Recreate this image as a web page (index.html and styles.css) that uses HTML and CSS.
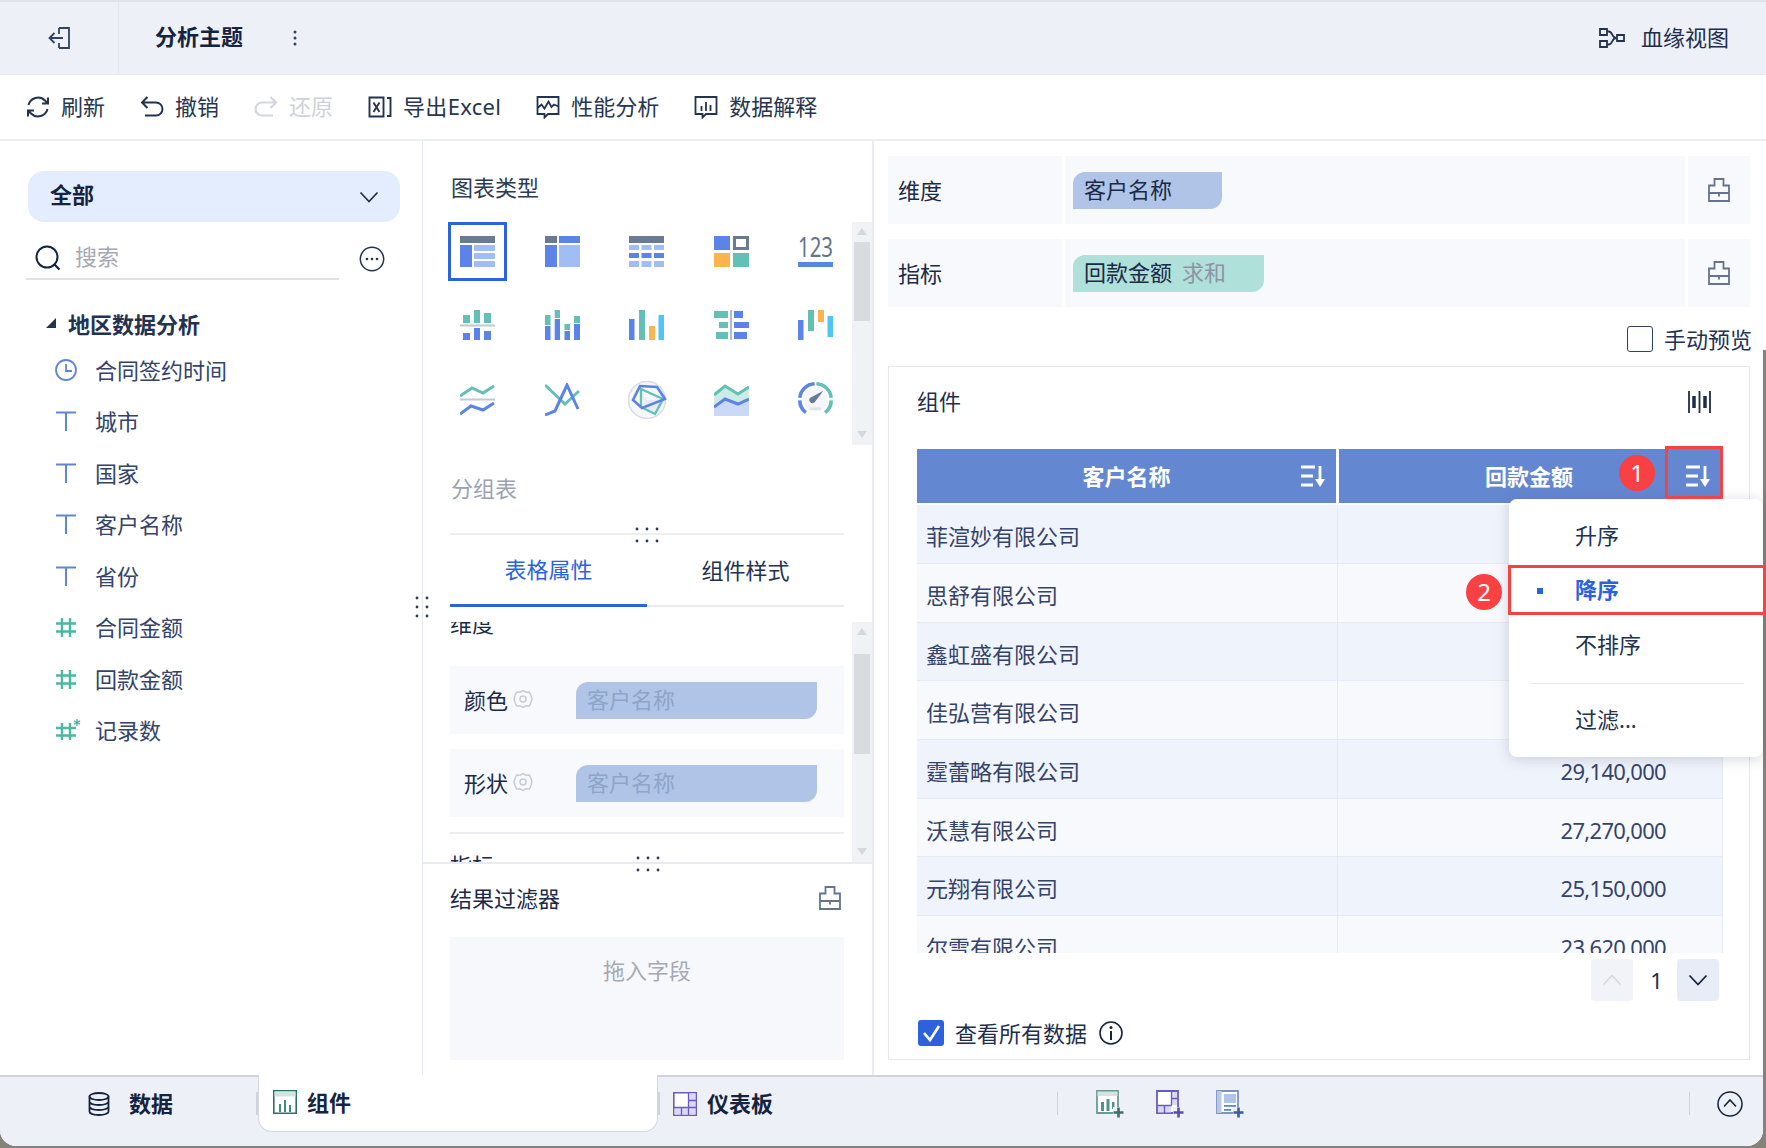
FILE: index.html
```html
<!DOCTYPE html>
<html lang="zh-CN">
<head>
<meta charset="utf-8">
<title>分析主题</title>
<link rel="stylesheet" href="styles.css">
</head>
<body>
<svg class="sprite" aria-hidden="true">
  <symbol id="i-t" viewBox="0 0 22 22"><path d="M1 2.500h20M11 2.500V21" fill="none" stroke="#5f86d6" stroke-width="2"/></symbol>
  <symbol id="i-hash" viewBox="0 0 22 22"><path d="M7 2v19M15 2v19M1 7.500h20M1 15.500h20" fill="none" stroke="#4ab8a4" stroke-width="2.400"/></symbol>
  <symbol id="i-drop" viewBox="0 0 22 24"><path d="M6.500 7.500V1h9v6.500H21v15.500H1V7.500zM1 15h20M11 15v3.500" fill="none" stroke="#65738d" stroke-width="1.800"/></symbol>
  <symbol id="i-sort" viewBox="0 0 26 24"><path d="M1 3h14M1 12h12M1 21h12M20 2v16" fill="none" stroke="#fff" stroke-width="2.800"/><path d="M15 15h10l-5 8z" fill="#fff"/></symbol>
  <symbol id="i-gear" viewBox="0 0 20 20"><path d="M10 1.500l3 1.700 3.400-.2 1.500 3.300L19 10l-1.100 3.700-1.500 3.300-3.400-.2-3 1.700-3-1.700-3.400.2-1.500-3.300L1 10l1.100-3.700L3.600 3l3.400.2z" fill="none" stroke="#c6ccd7" stroke-width="1.500"/><circle cx="10" cy="10" r="3" fill="none" stroke="#c6ccd7" stroke-width="1.500"/></symbol>
  <symbol id="i-dots-h" viewBox="0 0 24 16"><g fill="#2a3a58"><circle cx="2" cy="2" r="1.400"/><circle cx="12" cy="2" r="1.400"/><circle cx="22" cy="2" r="1.400"/><circle cx="2" cy="14" r="1.400"/><circle cx="12" cy="14" r="1.400"/><circle cx="22" cy="14" r="1.400"/></g></symbol>
</svg>

<div class="app">
  <header class="topbar">
    <div class="back-cell">
      <svg class="ic-22" viewBox="0 0 22 22"><path d="M11 1h10v20H11M11 1v6M11 21v-5M1.500 11H15M6.500 6l-5 5 5 5" fill="none" stroke="#33435f" stroke-width="1.800"/></svg>
    </div>
    <div class="app-title">分析主题</div>
    <svg class="title-more" viewBox="0 0 4 16"><g fill="#33425f"><circle cx="2" cy="2" r="1.500"/><circle cx="2" cy="8" r="1.500"/><circle cx="2" cy="14" r="1.500"/></g></svg>
    <div class="lineage">
      <svg class="ic-lineage" viewBox="0 0 26 20"><path d="M8 3.500h2c3.500 0 3 6.500 7 6.500M8 16.500h2c3.500 0 3-6.500 7-6.500" fill="none" stroke="#23324f" stroke-width="1.800"/><path d="M1 1h7v6H1zM1 13h7v6H1zM18 7h7v6h-7z" fill="none" stroke="#23324f" stroke-width="1.800"/></svg>
      <span>血缘视图</span>
    </div>
  </header>

  <nav class="toolbar">
    <div class="tool">
      <svg class="ic-24" viewBox="0 0 24 24"><path d="M2.500 10A9.800 9.800 0 0 1 19 5.500L22 8.500M22 2.500v6h-6M21.500 14A9.800 9.800 0 0 1 5 18.500L2 15.500M2 21.500v-6h6" fill="none" stroke="#23324f" stroke-width="2"/></svg>
      <span>刷新</span>
    </div>
    <div class="tool">
      <svg class="ic-24" viewBox="0 0 24 24"><path d="M7.500 2L2 7.500 7.500 13M2 7.500h14a6.500 6.500 0 0 1 0 13H5" fill="none" stroke="#23324f" stroke-width="2"/></svg>
      <span>撤销</span>
    </div>
    <div class="tool is-disabled">
      <svg class="ic-24" viewBox="0 0 24 24"><path d="M16.500 2L22 7.500 16.500 13M22 7.500H8a6.500 6.500 0 0 0 0 13h11" fill="none" stroke="#d3d8e0" stroke-width="2.200"/></svg>
      <span>还原</span>
    </div>
    <div class="tool tool-excel">
      <svg class="ic-24" viewBox="0 0 24 24"><path d="M1.500 2.500h14v19h-14zM5.500 7.500l6 9.500M11.500 7.500l-6 9.500M19 3h3.500v18H19" fill="none" stroke="#23324f" stroke-width="1.900"/></svg>
      <span>导出Excel</span>
    </div>
    <div class="tool">
      <svg class="ic-24" viewBox="0 0 24 24"><path d="M1.500 2h21v17H12l-3.500 3.500V19h-7zM1.500 13l4-3.500 3 4 4-7 3 5.500 2.500-2.500 4.500 2" fill="none" stroke="#23324f" stroke-width="1.800"/></svg>
      <span>性能分析</span>
    </div>
    <div class="tool">
      <svg class="ic-24" viewBox="0 0 24 24"><path d="M1.500 2h21v17H12l-3.500 3.500V19h-7zM7.500 11v5M12 7v9M16.500 10v6" fill="none" stroke="#23324f" stroke-width="1.800"/></svg>
      <span>数据解释</span>
    </div>
  </nav>

  <main class="main">
    <aside class="left">
      <div class="select">
        <span>全部</span>
        <svg class="ic-chev" viewBox="0 0 20 12"><path d="M1.500 1.500L10 10.500l8.500-9" fill="none" stroke="#23324f" stroke-width="1.800"/></svg>
      </div>
      <div class="search-row">
        <div class="search">
          <svg class="ic-26" viewBox="0 0 26 26"><circle cx="12" cy="12" r="10.500" fill="none" stroke="#14233f" stroke-width="2"/><path d="M19.500 19.500l5 5" stroke="#14233f" stroke-width="2.200"/></svg>
          <span>搜索</span>
        </div>
        <svg class="ic-more" viewBox="0 0 26 26"><circle cx="13" cy="13" r="11.700" fill="none" stroke="#23324f" stroke-width="1.500"/><g fill="#23324f"><circle cx="8" cy="13" r="1.300"/><circle cx="13" cy="13" r="1.300"/><circle cx="18" cy="13" r="1.300"/></g></svg>
      </div>
      <div class="tree-title"><i class="tri"></i>地区数据分析</div>
      <ul class="fields">
        <li><svg class="ic-field" viewBox="0 0 22 22"><circle cx="11" cy="11" r="10" fill="none" stroke="#5f86d6" stroke-width="1.800"/><path d="M11 5v7h6" fill="none" stroke="#5f86d6" stroke-width="1.800"/></svg>合同签约时间</li>
        <li><svg class="ic-field"><use href="#i-t"/></svg>城市</li>
        <li><svg class="ic-field"><use href="#i-t"/></svg>国家</li>
        <li><svg class="ic-field"><use href="#i-t"/></svg>客户名称</li>
        <li><svg class="ic-field"><use href="#i-t"/></svg>省份</li>
        <li><svg class="ic-field"><use href="#i-hash"/></svg>合同金额</li>
        <li><svg class="ic-field"><use href="#i-hash"/></svg>回款金额</li>
        <li><svg class="ic-field ic-star" viewBox="0 0 26 22"><path d="M7 4v17M15 4v17M1 9h20M1 16.500h20" fill="none" stroke="#4ab8a4" stroke-width="2.400"/><path d="M22 0v7M19 2l6 3M25 2l-6 3" stroke="#4ab8a4" stroke-width="1.400"/></svg>记录数</li>
      </ul>
    </aside>

    <section class="mid">
      <div class="mid-top">
        <h2 class="mid-title">图表类型</h2>
        <div class="chart-wrap">
          <div class="chart-grid">
            <div class="chart is-selected"><svg class="ic-chart" viewBox="0 0 35 31"><path d="M0 0h35v7H0z" fill="#6b7a93"/><path d="M0 9h12v22H0z" fill="#5b83e8"/><path d="M14 9h21v6H14zM14 17h21v6H14zM14 25h21v6H14z" fill="#a1bdf5"/></svg></div>
            <div class="chart"><svg class="ic-chart" viewBox="0 0 35 31"><path d="M0 0h12v7H0z" fill="#6b7a93"/><path d="M14 0h21v7H14zM0 9h12v22H0z" fill="#5b83e8"/><path d="M14 9h21v22H14z" fill="#a1bdf5"/></svg></div>
            <div class="chart"><svg class="ic-chart" viewBox="0 0 35 31"><path d="M0 0h35v7H0z" fill="#6b7a93"/><path d="M0 9h10v5H0zM12.500 9h10v5h-10zM25 9h10v5H25zM0 25h10v6H0zM12.500 25h10v6h-10zM25 25h10v6H25z" fill="#a1bdf5"/><path d="M0 17h10v5H0zM12.500 17h10v5h-10zM25 17h10v5H25z" fill="#5b83e8"/></svg></div>
            <div class="chart"><svg class="ic-chart" viewBox="0 0 35 31"><path d="M0 0h16v14H0z" fill="#5b83e8"/><path d="M20.500 1.500h13v11h-13z" fill="none" stroke="#6b7a93" stroke-width="3"/><path d="M0 17h16v14H0z" fill="#fdb44e"/><path d="M19 17h16v14H19z" fill="#62c0b4"/></svg></div>
            <div class="chart"><svg class="ic-chart" viewBox="0 0 35 31"><text class="num-text" x="0" y="21" textLength="35" lengthAdjust="spacingAndGlyphs">123</text><path d="M0 26h35v5H0z" fill="#5b83e8"/></svg></div>

            <div class="chart"><svg class="ic-chart" viewBox="0 0 35 31"><path d="M0 14.500h35v2H0z" fill="#c0c7d5"/><path d="M3 5h7v8H3zM14 0h6v13h-6zM24 3h7v10h-7z" fill="#62c0b4"/><path d="M3 23h7v7H3zM14 18h6v12h-6zM24 21h7v9h-7z" fill="#5b83e8"/></svg></div>
            <div class="chart"><svg class="ic-chart" viewBox="0 0 35 31"><path d="M0 5h5.500v10H0zM9.700 0H15v8H9.700zM19.500 14H25v6h-5.500zM29 6h6v7h-6z" fill="#62c0b4"/><path d="M0 16h5.500v14H0zM9.700 9H15v21H9.700zM19.500 21H25v9h-5.500zM29 14h6v16h-6z" fill="#5b83e8"/></svg></div>
            <div class="chart"><svg class="ic-chart" viewBox="0 0 35 31"><path d="M0 9h5.500v21H0z" fill="#5b83e8"/><path d="M10 0h6v30h-6z" fill="#62c0b4"/><path d="M20 16h6v14h-6z" fill="#fdb44e"/><path d="M29.500 5H35v25h-5.500z" fill="#4ec5f5"/></svg></div>
            <div class="chart"><svg class="ic-chart" viewBox="0 0 35 31"><path d="M16 0h2v30h-2z" fill="#b3bbcb"/><path d="M0 1h14v7H0zM5 12h9v6H5zM2 22h12v7H2z" fill="#62c0b4"/><path d="M20 1h9v7h-9zM20 12h15v6H20zM20 22h13v7H20z" fill="#5b83e8"/></svg></div>
            <div class="chart"><svg class="ic-chart" viewBox="0 0 35 31"><path d="M0 10h5.500v20H0z" fill="#5b83e8"/><path d="M10 0h6v21h-6z" fill="#62c0b4"/><path d="M20 0h6v12h-6z" fill="#fdb44e"/><path d="M29.500 6H35v21h-5.500z" fill="#4ec5f5"/></svg></div>

            <div class="chart"><svg class="ic-chart-t" viewBox="0 0 35 33"><path d="M0 13l12-8 11 5 11-7" fill="none" stroke="#62c0b4" stroke-width="3"/><path d="M0 15.500h35v2H0z" fill="#c0c7d5"/><path d="M0 31l11-8 12 4 11-7" fill="none" stroke="#5b83e8" stroke-width="3"/></svg></div>
            <div class="chart"><svg class="ic-chart-t" viewBox="0 0 35 33"><path d="M0 2l20 19 14-13" fill="none" stroke="#62c0b4" stroke-width="3"/><path d="M0 32l10-4 12-26 11 24" fill="none" stroke="#5b83e8" stroke-width="3"/></svg></div>
            <div class="chart"><svg class="ic-radar" viewBox="0 0 40 40"><circle cx="20" cy="20" r="18.500" fill="#f6f7fa" stroke="#d8dce6" stroke-width="1.500"/><path d="M20 20l18-1-7 15-13-6-3-16z" fill="#e8ecf2"/><path d="M14 9l22 10-8 15-14-7z" fill="none" stroke="#62c0b4" stroke-width="2.300"/><path d="M13 6l17 1 8 12-23 9-9-8z" fill="none" stroke="#5b83e8" stroke-width="2.600"/></svg></div>
            <div class="chart"><svg class="ic-chart-t" viewBox="0 0 35 33"><path d="M0 12l11-9 13 8 11-7v12l-11 5-13-5-11 8z" fill="#cdeae5"/><path d="M0 24l11-8 13 5 11-5v17H0z" fill="#cbd9f8"/><path d="M0 12l11-9 13 8 11-7" fill="none" stroke="#62c0b4" stroke-width="3"/><path d="M0 24l11-8 13 5 11-5" fill="none" stroke="#5b83e8" stroke-width="3"/></svg></div>
            <div class="chart"><svg class="ic-gauge" viewBox="0 0 40 40"><circle cx="20" cy="20" r="14" fill="#f4f6fb"/><path d="M9 35A18 18 0 0 1 2 21M2 18A18 18 0 0 1 19 2" fill="none" stroke="#5b83e8" stroke-width="4"/><path d="M21 2A18 18 0 0 1 38 18M38 21A18 18 0 0 1 31 35" fill="none" stroke="#62c0b4" stroke-width="4"/><path d="M14 18l15-8-10 13a3.500 3.500 0 1 1-5-5z" fill="#6b7a93"/><path d="M14 29h12v3H14z" fill="#dfe3ea"/></svg></div>
          </div>
          <div class="scrollbar bar-chart">
            <i class="arrow-up"></i>
            <i class="thumb thumb-chart"></i>
            <i class="bar-space"></i>
            <i class="arrow-down"></i>
          </div>
        </div>
        <div class="chart-name">分组表</div>
      </div>

      <div class="tabs-block">
        <svg class="grip grip-a"><use href="#i-dots-h"/></svg>
        <div class="tabs">
          <div class="tab is-active"><span>表格属性</span></div>
          <div class="tab"><span>组件样式</span></div>
        </div>
      </div>

      <div class="prop-wrap">
        <div class="prop-scroll">
          <div class="prop-cut-top">维度</div>
          <div class="prop-row">
            <span class="prop-label">颜色</span>
            <svg class="ic-gear"><use href="#i-gear"/></svg>
            <span class="pill pill-ghost"><span>客户名称</span></span>
          </div>
          <div class="prop-row prop-row-2">
            <span class="prop-label">形状</span>
            <svg class="ic-gear"><use href="#i-gear"/></svg>
            <span class="pill pill-ghost"><span>客户名称</span></span>
          </div>
          <div class="prop-sep"></div>
          <div class="prop-cut-bottom">指标</div>
        </div>
        <div class="scrollbar bar-prop">
          <i class="arrow-up"></i>
          <i class="thumb-gap"></i>
          <i class="thumb thumb-prop"></i>
          <i class="bar-space"></i>
          <i class="arrow-down"></i>
        </div>
      </div>

      <div class="filter">
        <svg class="grip grip-b"><use href="#i-dots-h"/></svg>
        <div class="filter-head">
          <span>结果过滤器</span>
          <svg class="ic-drop"><use href="#i-drop"/></svg>
        </div>
        <div class="filter-box">拖入字段</div>
      </div>
    </section>

    <section class="right">
      <div class="shelf">
        <div class="shelf-cell shelf-label">维度</div>
        <div class="shelf-cell shelf-body"><span class="pill pill-blue"><span>客户名称</span></span></div>
        <div class="shelf-cell shelf-end"><svg class="ic-drop"><use href="#i-drop"/></svg></div>
      </div>
      <div class="shelf shelf-2">
        <div class="shelf-cell shelf-label">指标</div>
        <div class="shelf-cell shelf-body"><span class="pill pill-green"><span>回款金额</span><em>求和</em></span></div>
        <div class="shelf-cell shelf-end"><svg class="ic-drop"><use href="#i-drop"/></svg></div>
      </div>
      <div class="preview"><i class="check-empty"></i><span>手动预览</span></div>

      <div class="widget">
        <div class="widget-head">
          <span>组件</span>
          <svg class="ic-cols" viewBox="0 0 23 22"><path d="M1 0v22M11.500 0v22M22 0v22" stroke="#1f2d4a" stroke-width="1.800"/><path d="M6 5v12M17 5v12" stroke="#1f2d4a" stroke-width="3.500"/></svg>
        </div>
        <div class="table">
          <div class="thead">
            <div class="th"><span>客户名称</span><svg class="ic-sort"><use href="#i-sort"/></svg></div>
            <div class="th th-2"><span>回款金额</span><svg class="ic-sort"><use href="#i-sort"/></svg></div>
          </div>
          <div class="tr odd"><div class="td">菲渲妙有限公司</div><div class="td num"></div></div>
          <div class="tr"><div class="td">思舒有限公司</div><div class="td num"></div></div>
          <div class="tr odd"><div class="td">鑫虹盛有限公司</div><div class="td num"></div></div>
          <div class="tr"><div class="td">佳弘营有限公司</div><div class="td num"></div></div>
          <div class="tr odd"><div class="td">霆蕾略有限公司</div><div class="td num">29,140,000</div></div>
          <div class="tr"><div class="td">沃慧有限公司</div><div class="td num">27,270,000</div></div>
          <div class="tr odd"><div class="td">元翔有限公司</div><div class="td num">25,150,000</div></div>
          <div class="tr"><div class="td">尔雪有限公司</div><div class="td num">23,620,000</div></div>
        </div>
        <div class="pager">
          <div class="page-btn is-off"><svg class="ic-pg" viewBox="0 0 20 12"><path d="M1.500 10.500L10 1.500l8.500 9" fill="none" stroke="#d5d9e0" stroke-width="1.800"/></svg></div>
          <div class="page-no">1</div>
          <div class="page-btn is-on"><svg class="ic-pg" viewBox="0 0 20 12"><path d="M1.500 1.500L10 10.500l8.500-9" fill="none" stroke="#14233f" stroke-width="1.800"/></svg></div>
        </div>
        <div class="all-data">
          <i class="check-on"><svg viewBox="0 0 26 26"><path d="M6 13l6 7 9-14" fill="none" stroke="#fff" stroke-width="2.600"/></svg></i>
          <span>查看所有数据</span>
          <svg class="ic-info" viewBox="0 0 24 24"><circle cx="12" cy="12" r="11" fill="none" stroke="#14233f" stroke-width="1.600"/><path d="M12 10v9" stroke="#14233f" stroke-width="2"/><circle cx="12" cy="6.500" r="1.500" fill="#14233f"/></svg>
        </div>
      </div>
    </section>
  </main>

  <footer class="bottombar">
    <div class="btab btab-data">
      <svg class="ic-btab" viewBox="0 0 22 24"><g fill="none" stroke="#14233f" stroke-width="1.800"><ellipse cx="11" cy="4.500" rx="9.500" ry="3.500"/><path d="M1.500 4.500v15c0 2 4 3.500 9.500 3.500s9.500-1.500 9.500-3.500v-15M1.500 9.500c0 2 4 3.500 9.500 3.500s9.500-1.500 9.500-3.500M1.500 14.500c0 2 4 3.500 9.500 3.500s9.500-1.500 9.500-3.500"/></g></svg>
      <span>数据</span>
    </div>
    <i class="btab-sep"></i>
    <div class="btab btab-active">
      <svg class="ic-btab" viewBox="0 0 24 24"><path d="M.8.800h22.400v22.400H.8z" fill="#fff" stroke="#2f6f6a" stroke-width="1.600"/><path d="M1.500 1.500h21v5h-21z" fill="#cfe6e0"/><path d="M6 14h2v8H6zM11 10h2v12h-2zM16 15h2v7h-2z" fill="#3f8b84"/></svg>
      <span>组件</span>
    </div>
    <i class="btab-sep"></i>
    <div class="btab btab-dash">
      <svg class="ic-btab" viewBox="0 0 24 24"><path d="M.8.800h22.400v22.400H.8z" fill="#fff" stroke="#6a5bc0" stroke-width="1.600"/><path d="M16 1.500h6.500V8H16zM16 9h6.500v6H16zM1.500 16H8v6.500H1.500zM9 16h6v6.500H9zM16 16h6.500v6.500H16z" fill="#dcd8f5"/><path d="M.8 15.500h22.400M15.500.8v22.400M15.500 8.500h8M8.500 15.500v8" fill="none" stroke="#6a5bc0" stroke-width="1.300"/></svg>
      <span>仪表板</span>
    </div>
    <div class="bar-tools">
      <i class="bar-sep"></i>
      <svg class="ic-add ic-add-1" viewBox="0 0 28 28"><path d="M1 1h21v22H1z" fill="#fff" stroke="#6c9a93" stroke-width="1.800"/><path d="M1.500 1.500h20V6h-20z" fill="#cfe6e0"/><path d="M5 12h3v9H5zM10.500 9h3v12h-3zM16 12h2.500v7H16z" fill="#4f938b"/><path d="M17 17h11v11H17z" fill="#edf0f6"/><path d="M22.500 17.500v10M17.500 22.500h10" stroke="#3f6f6a" stroke-width="2.600"/></svg>
      <svg class="ic-add" viewBox="0 0 28 28"><path d="M1 1h21v22H1z" fill="#fff" stroke="#6a5bc0" stroke-width="1.800"/><path d="M15.500 2H21v6h-5.500zM15.500 9H21v6h-5.500zM2 16h6v6.500H2zM9 16h6v6.500H9z" fill="#dcd8f5"/><path d="M1 15.500h14.500M15.500 1v14.500M15.500 8.500H22M8.500 15.500V23" fill="none" stroke="#6a5bc0" stroke-width="1.300"/><path d="M17 17h11v11H17z" fill="#edf0f6"/><path d="M22.500 17.500v10M17.500 22.500h10" stroke="#5a4bb0" stroke-width="2.600"/></svg>
      <svg class="ic-add" viewBox="0 0 28 28"><path d="M1 1h21v22H1z" fill="#fff" stroke="#7c93c4" stroke-width="1.800"/><path d="M1 1h4.500v22H1z" fill="#b9c8e8"/><path d="M8 4h12v9H8z" fill="#afc4e9"/><path d="M8 15h12v1.800H8z" fill="#5f86d6"/><path d="M8 19h7v1.800H8z" fill="#5f86d6"/><path d="M17 17h11v11H17z" fill="#edf0f6"/><path d="M22.500 17.500v10M17.500 22.500h10" stroke="#3e5a97" stroke-width="2.600"/></svg>
      <i class="bar-sep bar-sep-2"></i>
      <svg class="ic-up" viewBox="0 0 26 26"><circle cx="13" cy="13" r="12" fill="none" stroke="#14233f" stroke-width="1.500"/><path d="M7 15.500l6-6.500 6 6.500" fill="none" stroke="#14233f" stroke-width="1.600"/></svg>
    </div>
  </footer>

  <svg class="grip-v" viewBox="0 0 14 22"><g fill="#2a3a58"><circle cx="2" cy="2" r="1.400"/><circle cx="12" cy="2" r="1.400"/><circle cx="2" cy="11" r="1.400"/><circle cx="12" cy="11" r="1.400"/><circle cx="2" cy="20" r="1.400"/><circle cx="12" cy="20" r="1.400"/></g></svg>

  <div class="menu">
    <div class="menu-item"><span>升序</span></div>
    <div class="menu-item is-current"><i class="menu-dot"></i><span>降序</span></div>
    <div class="menu-item"><span>不排序</span></div>
    <div class="menu-sep"></div>
    <div class="menu-item"><span>过滤...</span></div>
  </div>
  <div class="mark-box mark-box-sort"></div>
  <div class="mark-box mark-box-menu"></div>
  <div class="mark-no mark-no-1">1</div>
  <div class="mark-no mark-no-2">2</div>
</div>
</body>
</html>
```

FILE: styles.css
```css
* { box-sizing: border-box; }
html, body { margin: 0; padding: 0; height: 1148px; }
body {
  overflow: hidden;
  background: linear-gradient(#fff 350px, #85827a 350px);
  font-family: "Noto Sans", "Noto Sans CJK SC", sans-serif;
  font-size: 22px;
  line-height: 30px;
  color: #1b2a47;
}
h2, ul { margin: 0; padding: 0; font: inherit; }
li { list-style: none; }
i, em { font-style: normal; display: block; }
svg { display: block; flex: none; }
.sprite { position: absolute; width: 0; height: 0; }

.app { position: relative; width: 1763px; height: 1146px; display: flex; flex-direction: column; background: #fff; border-radius: 0 0 16px 16px; }

/* top bar */
.topbar { width: 1766px; height: 75px; flex: none; display: flex; align-items: center; background: #edf0f6; border-top: 2px solid #dfe2e7; border-bottom: 1px solid #e2e5ec; }
.back-cell { width: 119px; height: 100%; display: flex; align-items: center; padding-left: 48px; border-right: 1px solid #e4e7ee; }
.ic-22 { width: 22px; height: 22px; }
.app-title { margin-left: 36px; padding-bottom: 4px; font-weight: 700; color: #14233f; }
.title-more { width: 4px; height: 16px; margin-left: 50px; }
.lineage { margin-left: auto; margin-right: 37px; display: flex; align-items: center; gap: 16px; color: #1f2e4b; }
.lineage span { padding-bottom: 2px; }
.ic-lineage { width: 26px; height: 20px; }

/* toolbar */
.toolbar { width: 1766px; height: 66px; flex: none; display: flex; align-items: center; gap: 35px; padding-left: 26px; border-bottom: 2px solid #eceef2; }
.tool { display: flex; align-items: center; gap: 11px; color: #27364f; }
.tool span { padding-bottom: 2px; }
.tool-excel span { letter-spacing: .3px; }
.tool.is-disabled { color: #cdd2da; }
.ic-24 { width: 24px; height: 24px; }

/* main */
.main { height: 934px; flex: none; display: flex; }

/* left */
.left { width: 423px; flex: none; padding: 30px 0 0 28px; border-right: 1px solid #e6e8ef; }
.select { width: 372px; height: 51px; display: flex; align-items: center; justify-content: space-between; padding: 0 21px 0 22px; background: #e4edfd; border-radius: 16px; font-weight: 700; color: #14233f; }
.select span { padding-bottom: 6px; }
.ic-chev { width: 20px; height: 12px; }
.search-row { display: flex; align-items: center; margin: 15px 0 0 -2px; }
.search { width: 313px; height: 43px; display: flex; align-items: center; gap: 14px; padding-left: 9px; border-bottom: 2px solid #e0e2e6; color: #a4a9b4; }
.search span { padding-bottom: 4px; }
.ic-26 { width: 26px; height: 26px; }
.ic-more { width: 26px; height: 26px; margin-left: 20px; }
.tree-title { position: relative; display: flex; align-items: center; margin: 29px 0 0 18px; padding-left: 22px; height: 30px; font-weight: 700; color: #22324f; line-height: 30px; }
.tri { width: 0; height: 0; position: absolute; left: 0; top: 9px; border-style: solid; border-width: 0 0 10px 10px; border-color: transparent transparent #22324f transparent; }
.fields { margin-top: 5px; }
.fields li { height: 51.500px; display: flex; align-items: center; gap: 18px; padding-left: 26px; color: #33436a; }
.ic-field { width: 22px; height: 22px; margin-left: 1px; }
.ic-star { width: 26px; margin-right: -4px; }

/* middle */
.mid { width: 451px; flex: none; display: flex; flex-direction: column; border-right: 2px solid #e9ebf1; }
.mid-top { padding: 31px 0 0 28px; }
.mid-title { color: #2b3a55; }
.chart-wrap { display: flex; margin: 20px 0 0 -3px; }
.chart-grid { width: 405px; height: 223px; display: grid; grid-template-columns: repeat(5, 59px); grid-template-rows: repeat(3, 59px); column-gap: 25.500px; row-gap: 15px; align-content: start; }
.chart { display: flex; align-items: center; justify-content: center; }
.chart.is-selected { border: 3px solid #2a63dd; }
.ic-chart { width: 35px; height: 31px; }
.ic-chart-t { width: 35px; height: 33px; }
.ic-radar { width: 40px; height: 40px; }
.ic-gauge { width: 35px; height: 35px; }
.num-text { font-size: 28px; font-family: "Noto Sans", sans-serif; font-weight: 400; fill: #65738d; }
.scrollbar { width: 20px; flex: none; display: flex; flex-direction: column; align-items: center; background: #f1f2f5; }
.bar-chart { height: 223px; }
.bar-prop { height: 240px; }
.arrow-up, .arrow-down { width: 0; height: 0; margin: 6px 0 7px; border-style: solid; border-color: transparent; border-width: 0 5px 7px; }
.arrow-up { border-bottom-color: #d4d8df; }
.arrow-down { border-width: 7px 5px 0; border-top-color: #d4d8df; }
.thumb { width: 16px; background: #d8dbe0; }
.thumb-chart { height: 79px; }
.thumb-prop { height: 100px; }
.thumb-gap { height: 12px; }
.bar-space { flex: 1; }
.chart-name { margin-top: 28px; color: #9aa3b2; }

.tabs-block { position: relative; margin: 30px 28px 0 27px; border-top: 2px solid #eceef2; }
.grip { position: absolute; width: 24px; height: 16px; left: 50%; margin-left: -12px; }
.grip-a { top: -8px; }
.tabs { height: 72px; display: flex; border-bottom: 2px solid #e9ebf1; }
.tab { flex: 1; display: flex; align-items: center; justify-content: center; margin-bottom: -2px; color: #22324f; }
.tab span { padding-bottom: 2px; }
.tab.is-active { color: #2a63dd; border-bottom: 3px solid #2a63dd; }

.prop-wrap { height: 240px; flex: none; display: flex; margin: 15px 0 0 27px; }
.prop-scroll { width: 395px; margin-right: 8px; overflow: hidden; }
.prop-cut-top { margin-top: -14px; }
.prop-row { height: 68px; display: flex; align-items: center; margin-top: 28px; padding-left: 14px; background: #f8f9fd; }
.prop-row-2 { margin-top: 15px; }
.ic-gear { width: 20px; height: 20px; margin: -2px 43px 0 4px; }
.prop-label { width: 45px; }
.pill { display: inline-flex; align-items: center; height: 37px; border-radius: 12px 0 12px 0; padding: 0 11px; line-height: 30px; }
.pill span, .pill em { padding-bottom: 3px; }
.pill-ghost { width: 241px; background: #afc4e7; color: #8ea4c8; }
.prop-sep { height: 2px; margin-top: 15px; background: #eceef2; }
.prop-cut-bottom { margin-top: 16px; }

.filter { position: relative; flex: 1; padding: 19px 28px 0 27px; border-top: 2px solid #e9ebf1; }
.grip-b { top: -8px; }
.filter-head { display: flex; align-items: center; justify-content: space-between; padding-right: 3px; }
.ic-drop { width: 22px; height: 24px; }
.filter-box { height: 123px; margin-top: 24px; padding-top: 18px; text-align: center; background: #f7f8fc; color: #a4a9b4; }

/* right */
.right { flex: 1; padding: 15px 13px 0 14px; }
.shelf { display: grid; grid-template-columns: 174px 1fr 62px; column-gap: 3px; height: 68px; }
.shelf-2 { margin-top: 15px; }
.shelf-cell { display: flex; align-items: center; background: #f8f9fd; }
.shelf-label { padding-left: 10px; }
.shelf-body { padding-left: 8px; }
.shelf-end { justify-content: center; }
.pill-blue { width: 149px; background: #afc4e7; }
.pill-green { width: 191px; background: #afe0d9; }
.pill-green em { margin-left: 10px; color: #8d94a4; }

.preview { height: 26px; margin: 19px -2px 0 0; display: flex; align-items: center; justify-content: flex-end; gap: 11px; color: #22324f; }
.check-empty { width: 26px; height: 26px; background: #fff; border: 1.500px solid #33425f; border-radius: 3px; }

.widget { height: 694px; margin-top: 14px; padding: 0 26px 0 28px; border: 1px solid #e6e8f0; }
.widget-head { height: 82px; padding: 0 12px 14px 0; display: flex; align-items: center; justify-content: space-between; color: #1f2e4b; }
.ic-cols { width: 23px; height: 22px; margin-top: 2px; }

.table { height: 504px; overflow: hidden; }
.thead { display: grid; grid-template-columns: 419px 1fr; column-gap: 3px; height: 54px; margin-bottom: 2.300px; }
.th { position: relative; display: flex; align-items: center; justify-content: center; background: #6487d1; color: #fff; font-weight: 700; }
.th-2 span { margin-right: 4px; }
.ic-sort { position: absolute; right: 10px; top: 15px; width: 26px; height: 24px; }
.th-2 .ic-sort { right: 12px; }
.tr { display: grid; grid-template-columns: 421px 1fr; height: 58.700px; border-bottom: 1px solid #e6eaf3; background: #f7f9fd; }
.tr.odd { background: #eff3fb; }
.td { display: flex; align-items: center; padding: 4px 0 0 9px; border-right: 1px solid #e6eaf3; color: #33436a; }
.td.num { justify-content: flex-end; padding-right: 56px; letter-spacing: -.7px; }

.pager { display: flex; align-items: center; justify-content: flex-end; margin-top: 6px; padding-right: 4px; }
.page-btn { width: 42px; height: 42px; display: flex; align-items: center; justify-content: center; border-radius: 4px; }
.page-btn.is-off { background: #f1f3f9; }
.page-btn.is-on { background: #e8ecf6; }
.ic-pg { width: 20px; height: 12px; }
.page-no { width: 44px; padding-left: 3px; text-align: center; color: #1f2e4b; }

.all-data { display: flex; align-items: center; margin: 19px 0 0 1px; height: 26px; }
.check-on { width: 26px; height: 26px; background: #2e62dd; border-radius: 3px; }
.all-data span { margin-left: 11px; color: #1f2e4b; }
.ic-info { width: 24px; height: 24px; margin-left: 12px; }

/* bottom */
.bottombar { flex: 1; display: flex; align-items: flex-start; width: 1763px; background: #edf0f6; border-top: 2px solid #cfd3df; border-radius: 0 0 16px 16px; }
.btab { height: 53px; display: flex; align-items: center; font-weight: 700; color: #14233f; }
.btab-data span, .btab-dash span { padding-bottom: 2px; }
.btab-data { width: 256px; padding-left: 88px; gap: 19px; }
.btab-sep { width: 2px; height: 23px; margin-top: 15px; background: #cfd3df; }
.btab-active { position: relative; width: 400px; height: 57px; margin-top: -2px; padding: 0 0 2px 14px; gap: 10px; background: #fff; border: 1px solid #d4d8e3; border-top: 0; border-radius: 0 0 14px 14px; }
.btab-dash { padding-left: 13px; gap: 10px; }
.ic-btab { width: 24px; height: 24px; }
.btab-data .ic-btab { width: 22px; }
.bar-tools { display: flex; align-items: center; height: 53px; margin-left: auto; }
.bar-sep { width: 1px; height: 23px; background: #cfd3df; margin-right: 38px; }
.bar-sep-2 { margin: 0 27px 0 445px; }
.ic-add { width: 28px; height: 28px; margin-right: 32px; }
.ic-add:nth-of-type(3) { margin-right: 0; }
.ic-up { width: 26px; height: 26px; margin-right: 20px; }

/* overlays */
.grip-v { position: absolute; left: 415px; top: 596px; width: 14px; height: 22px; }
.menu { position: absolute; left: 1509px; top: 499px; width: 254px; height: 258px; padding-top: 10px; background: #fff; border-radius: 8px; box-shadow: 0 2px 14px rgba(60, 70, 100, .22); }
.menu-item { height: 54.500px; display: flex; align-items: center; padding-left: 66px; color: #22324f; }
.menu-item span { padding-bottom: 3px; }
.menu-item.is-current { padding-left: 28px; color: #2a63dd; font-weight: 700; }
.menu-dot { width: 6px; height: 6px; margin-right: 32px; background: #2a63dd; }
.menu-sep { height: 1px; margin: 10px 19px 10px 22px; background: #e6e8ee; }
.mark-box { position: absolute; border: 3px solid #f24444; }
.mark-box-sort { left: 1665px; top: 446px; width: 58px; height: 53px; }
.mark-box-menu { left: 1508px; top: 565px; width: 258px; height: 50px; }
.mark-no { position: absolute; width: 36px; height: 36px; border-radius: 50%; background: #f94144; color: #fff; text-align: center; line-height: 36px; font-size: 24px; }
.mark-no-1 { left: 1619px; top: 455px; }
.mark-no-2 { left: 1466px; top: 574px; }
```
